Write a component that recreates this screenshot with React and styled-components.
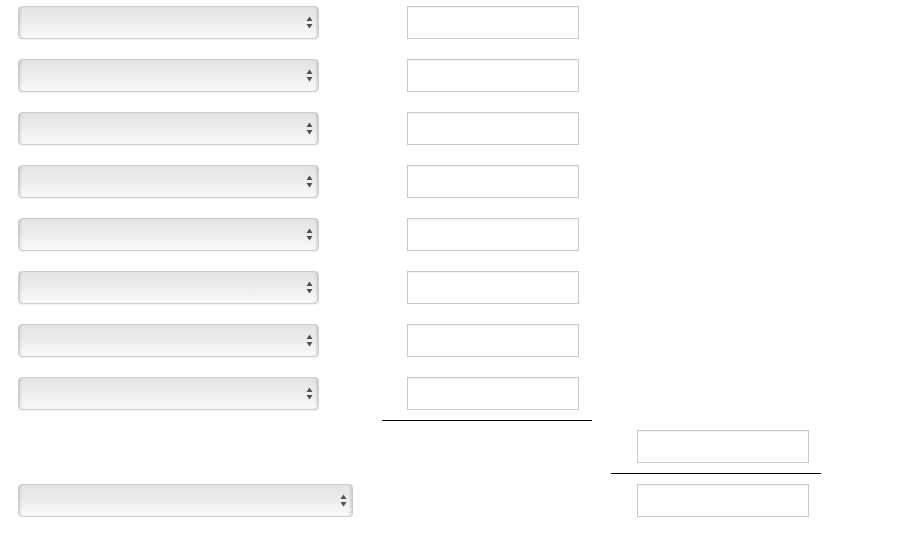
import React from "react"
import styled, { createGlobalStyle } from "styled-components"

// =============================================
// ===============   STYLES     ================
// =============================================

const GlobalStyle = createGlobalStyle`
  html, body {
    margin: 0;
    padding: 0;
    background: #fff;
    font-family: "Liberation Sans", Arial, sans-serif;
  }
`

const Page = styled.div`
  padding: 6px 0 0 18px;
  display: flex;
  flex-direction: column;
`

const Rows = styled.div`
  display: flex;
  flex-direction: column;
  gap: 20px;
`

const Row = styled.div`
  display: flex;
  align-items: center;
  height: 33px;
  margin-top: ${(p) => p.top || 0}px;
`

const SelectWrap = styled.div`
  position: relative;
  width: ${(p) => p.width}px;
  height: 33px;
  flex: none;

  svg {
    position: absolute;
    right: 6px;
    top: 10px;
    pointer-events: none;
  }
`

const Select = styled.select`
  appearance: none;
  -webkit-appearance: none;
  box-sizing: border-box;
  width: 100%;
  height: 100%;
  margin: 0;
  border: 1px solid #cdcdcd;
  border-radius: 4px;
  background: linear-gradient(to bottom, #e4e4e4 0%, #ececec 45%, #fafafa 100%);
  box-shadow: inset 3px 0 3px -2px rgba(0, 0, 0, 0.18),
    inset -3px 0 3px -2px rgba(0, 0, 0, 0.18), 0 1px 1px rgba(0, 0, 0, 0.06);
  outline: none;
`

const Input = styled.input`
  box-sizing: border-box;
  width: 172px;
  height: 33px;
  margin: 0 0 0 ${(p) => p.offset}px;
  padding: 0 6px;
  border: 1px solid #c9c9c9;
  box-shadow: inset 0 1px 1px rgba(0, 0, 0, 0.05);
  background: #fff;
  flex: none;
  outline: none;
`

const Rule = styled.div`
  width: 210px;
  height: 0;
  margin: 10px 0 0 ${(p) => p.offset}px;
  border-top: 1px solid #000;
`

const Footer = styled.div`
  display: flex;
  flex-direction: column;
`

// =============================================
// ===============   Component  ================
// =============================================

const Arrows = () => (
  <svg width="7" height="13" viewBox="0 0 7 13">
    <path d="M3.5 0.5 L6.5 5 L0.5 5 Z" fill="#4f4f4f" />
    <path d="M0.5 8 L6.5 8 L3.5 12.5 Z" fill="#4f4f4f" />
  </svg>
)

const FakeSelect = ({ width }) => (
  <SelectWrap width={width}>
    <Select defaultValue="">
      <option value=""></option>
    </Select>
    <Arrows />
  </SelectWrap>
)

const App = () => {
  const rows = [0, 1, 2, 3, 4, 5, 6, 7]
  return (
    <Page>
      <GlobalStyle />
      <Rows>
        {rows.map((i) => (
          <Row key={i}>
            <FakeSelect width={301} />
            <Input offset={88} />
          </Row>
        ))}
      </Rows>
      <Footer>
        <Rule offset={364} />
        <Row top={9}>
          <Input offset={619} />
        </Row>
        <Rule offset={593} />
        <Row top={10}>
          <FakeSelect width={335} />
          <Input offset={284} />
        </Row>
      </Footer>
    </Page>
  )
}

export default App
